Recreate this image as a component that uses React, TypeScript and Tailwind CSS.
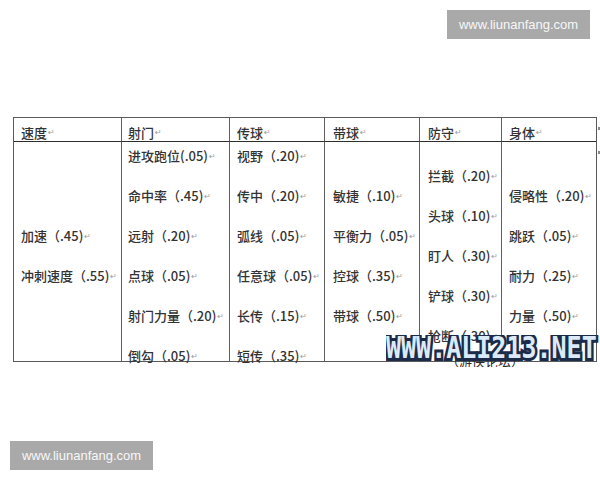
import React from "react";

const R = () => (
  <span className="ml-[1px] text-[8px] text-[#9a9a9a] font-['DejaVu_Sans',sans-serif] align-middle">↵</span>
);

const cols: { head: string; items: string[]; pl: string }[] = [
  { head: "速度", items: ["加速（.45)", "冲刺速度（.55)"], pl: "pl-[7px]" },
  {
    head: "射门",
    items: ["进攻跑位(.05)", "命中率（.45)", "远射（.20)", "点球（.05)", "射门力量（.20)", "倒勾（.05)"],
    pl: "pl-[6px]",
  },
  {
    head: "传球",
    items: ["视野（.20)", "传中（.20)", "弧线（.05)", "任意球（.05)", "长传（.15)", "短传（.35)"],
    pl: "pl-[7px]",
  },
  { head: "带球", items: ["敏捷（.10)", "平衡力（.05)", "控球（.35)", "带球（.50)"], pl: "pl-[8px]" },
  {
    head: "防守",
    items: ["拦截（.20)", "头球（.10)", "盯人（.30)", "铲球（.30)", "抢断（.30)"],
    pl: "pl-[8px]",
  },
  { head: "身体", items: ["侵略性（.20)", "跳跃（.05)", "耐力（.25)", "力量（.50)"], pl: "pl-[7px]" },
];

export default function App() {
  return (
    <div className="relative w-[600px] h-[480px] overflow-hidden bg-white font-['Noto_Sans_CJK_SC',sans-serif]">
      <div className="flex justify-end pt-[10px] pr-[10px]">
        <div className="flex h-[29px] w-[143px] items-center justify-center bg-[#a9a9a9] font-['Liberation_Sans',sans-serif] text-[13px] text-[#f7f7f7]">
          www.liunanfang.com
        </div>
      </div>

      <div className="relative ml-[13px] mt-[78px] w-[584px] border border-[#5a5a5a]">
        <div className="grid grid-cols-[108px_108px_95px_95px_82px_94px] grid-rows-[24px_219px] text-[13px] font-medium text-[#333333]">
          {cols.map((c, i) => (
            <div
              key={"h" + i}
              className={`flex items-center border-b border-[#2e2e2e] pt-[5px] leading-[13px] ${c.pl} ${
                i < 5 ? "border-r border-r-[#5f5f5f]" : ""
              }`}
            >
              <span>{c.head}</span>
              <R />
            </div>
          ))}
          {cols.map((c, i) => (
            <div
              key={"b" + i}
              className={`flex flex-col justify-center pt-[8px] ${c.pl} ${i < 5 ? "border-r border-[#5f5f5f]" : ""}`}
            >
              {c.items.map((t) => (
                <div key={t} className="h-[40px] shrink-0 whitespace-nowrap leading-[40px]">
                  {t}
                  <R />
                </div>
              ))}
            </div>
          ))}
        </div>
        <span className="absolute left-[584px] top-[9px] h-[3px] w-[2px] bg-[#8a8a8a]" />
        <span className="absolute left-[584px] top-[33px] h-[3px] w-[2px] bg-[#8a8a8a]" />
      </div>

      <div className="absolute left-[446px] top-[353px] h-[14px] overflow-hidden font-['Noto_Sans_CJK_SC',sans-serif] text-[13px] leading-[16px] text-[#2a2a2a]">
        （游侠论坛）
      </div>
      <div className="absolute left-[386px] top-[335px] flex h-[26px] w-[214px] items-center overflow-hidden">
        <div className="origin-center scale-y-[1.2] font-['DejaVu_Sans_Mono',monospace] text-[25px] font-bold leading-[24px] text-[#dceaf7] [-webkit-text-stroke:5px_#1b2b48] [paint-order:stroke_fill]">
          WWW.ALI213.NET
        </div>
      </div>

      <div className="ml-[10px] mt-[79px] flex h-[29px] w-[143px] items-center justify-center bg-[#a9a9a9] font-['Liberation_Sans',sans-serif] text-[13px] text-[#f7f7f7]">
        www.liunanfang.com
      </div>
    </div>
  );
}
